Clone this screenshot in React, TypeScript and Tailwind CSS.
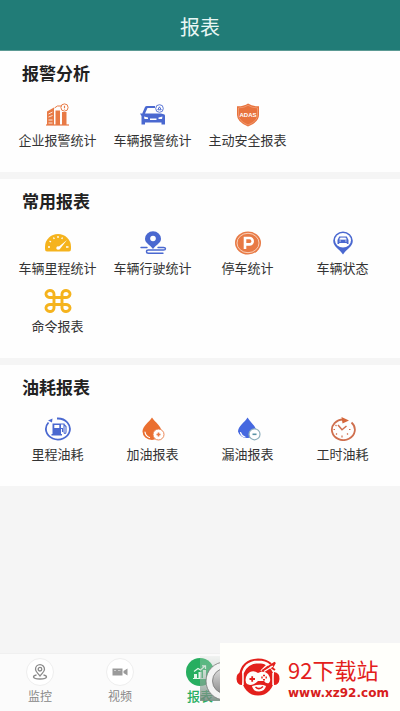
import type { ReactNode } from "react";

type Item = { label: string; icon: ReactNode };
type Section = { title: string; items: Item[] };

const ORANGE = "#e87a45";
const BLUE = "#4a68d0";
const YELLOW = "#f5b31d";

function Icon({ children }: { children: ReactNode }) {
  return (
    <svg viewBox="0 0 28 24" className="h-6 w-7" fill="none" aria-hidden="true">
      {children}
    </svg>
  );
}

const BuildingsIcon = (
  <Icon>
    <path d="M3 8.500 L10 4.500 V22 H3Z" fill={ORANGE} />
    <path d="M4.500 11 L8.500 9 M4.500 14 L8.500 12.500 M4.500 17 H8.500 M4.500 20 H8.500" stroke="#fff" strokeWidth="0.800" />
    <path d="M11.500 7.500 H16 V22 H11.500Z M18 9 H22.500 V22 H18Z" fill={ORANGE} />
    <path d="M2 22 H25" stroke={ORANGE} strokeWidth="1.200" />
    <path d="M10.500 5 Q13 2 17 3" stroke={ORANGE} strokeWidth="1" />
    <circle cx="20.500" cy="4.500" r="3.600" fill="#fff" stroke={ORANGE} strokeWidth="1" />
    <path d="M20.500 2.800 V5 M20.500 5.800 V6.500" stroke={ORANGE} strokeWidth="1.200" />
  </Icon>
);

const CarAlarmIcon = (
  <Icon>
    <path d="M3 11 L6 4 Q6.500 3 8 3 H16 V5 H8.500 L6 10.500 H22 L25.500 11.500 Q26 12 26 13 V21.500 H22.500 V19.500 H6 V21.500 H2.500 V13 L1 10.500 H3Z" fill={BLUE} />
    <path d="M5 13.500 L9 14.500 V16 H5.500Z M23.500 13.500 L19.500 14.500 V16 H23Z M11 15.500 H17.500 V17 H11Z" fill="#fff" />
    <circle cx="20.500" cy="5.500" r="3.800" fill="#fff" stroke={BLUE} strokeWidth="0.900" />
    <path d="M18.800 6.800 L20.500 3.800 L22.200 6.800Z" stroke={BLUE} strokeWidth="1" />
  </Icon>
);

const ShieldIcon = (
  <Icon>
    <path d="M14 .5 Q18 3.500 25 3.300 V12 Q25 19 14 23.500 Q3 19 3 12 V3.300 Q10 3.500 14 .5Z" fill="#e8733d" />
    <path d="M14 2.300 Q18 5 23.500 4.900 V12 Q23.500 18 14 22 Q4.500 18 4.500 12 V4.900 Q10 5 14 2.300Z" stroke="#f3a47e" strokeWidth="0.700" />
    <text x="14" y="13.500" textAnchor="middle" fill="#fff" fontSize="6" fontWeight="bold" fontFamily="Liberation Sans, sans-serif">ADAS</text>
  </Icon>
);

const GaugeIcon = (
  <Icon>
    <path d="M1 15.500 A13 12.500 0 0 1 27 15.500 V18 Q27 20.500 25 20.500 H3 Q1 20.500 1 18Z" fill={YELLOW} />
    <path d="M4 16 H6 M5.500 10 L7 11 M9.500 6.500 L10.300 8 M14 5 V7 M18.500 6.500 L17.700 8 M22 16 H24.500" stroke="#fff" strokeWidth="1.300" />
    <path d="M12.500 17.500 L23 9 L15.500 18.500Z" fill="#fff" />
    <circle cx="14" cy="17" r="1.700" fill="#fff" />
  </Icon>
);

const RouteIcon = (
  <Icon>
    <path d="M14 18 C10 13 6 12 6 7.800 A8 7.500 0 0 1 22 7.800 C22 12 18 13 14 18Z" fill={BLUE} />
    <circle cx="14" cy="7.500" r="2.800" fill="#fff" />
    <path d="M2 16.500 H8 M19 16.500 H24.500 Q26.500 16.500 26.500 17.800 Q26.500 19 24.500 19 H9.500 Q7.500 19 7.500 20.500 Q7.500 22.300 9.500 22.300 H24" stroke={BLUE} strokeWidth="1.400" strokeLinecap="round" />
  </Icon>
);

const ParkingIcon = (
  <Icon>
    <ellipse cx="14" cy="12" rx="13" ry="11.500" fill={ORANGE} />
    <ellipse cx="14" cy="12" rx="11" ry="9.700" stroke="#fbd9c6" strokeWidth="0.900" />
    <path d="M11 18 V7 H15.500 A3.200 3.200 0 0 1 15.500 13.400 H11" stroke="#fff" strokeWidth="2.600" />
  </Icon>
);

const CarPinIcon = (
  <Icon>
    <path d="M14 23.500 C11 18.500 4.200 16 4.200 9.800 A9.800 9.300 0 0 1 23.800 9.800 C23.800 16 17 18.500 14 23.500Z" fill={BLUE} />
    <ellipse cx="14" cy="9.300" rx="8" ry="7.300" fill="#fff" />
    <path d="M8.500 9 L10.200 5.500 H17.800 L19.500 9 V13 H17.800 V12 H10.200 V13 H8.500Z" fill={BLUE} />
    <path d="M10.700 8.300 L11.400 6.900 H16.600 L17.300 8.300Z M10.300 10 H12 M16 10 H17.700" fill="#fff" stroke="#fff" strokeWidth="0.700" />
  </Icon>
);

const CommandIcon = (
  <Icon>
    <path d="M10 8.500 H18 V15.500 H10Z M10 8.500 H6.500 A4 3.500 0 1 1 10 5Z M18 8.500 V5 A4 3.500 0 1 1 21.500 8.500Z M10 15.500 V19 A4 3.500 0 1 1 6.500 15.500Z M18 15.500 H21.500 A4 3.500 0 1 1 18 19Z" stroke={YELLOW} strokeWidth="2.900" />
  </Icon>
);

const FuelMileageIcon = (
  <Icon>
    <path d="M13 1.500 H14 A12 10.500 0 1 1 4.500 5.500" stroke={BLUE} strokeWidth="1.800" />
    <path d="M4 3.500 L8.500 1.500 L8 5.500Z" fill={BLUE} />
    <path d="M8.500 6.500 H17 V17 H18 V18.500 H7.500 V17 H8.500Z" fill={BLUE} />
    <path d="M10.300 8 H15.300 V11 H10.300Z" fill="#fff" />
    <path d="M17 7 H20 V15 Q20 16.500 21 16.500 Q22 16.500 22 15 V9.500 L20 7.500 M17 11.500 H18.500 V15" stroke={BLUE} strokeWidth="1.100" />
  </Icon>
);

const RefuelIcon = (
  <Icon>
    <path d="M13 .5 C16 5 22.500 9.500 22.500 14.500 A9.500 8.500 0 0 1 3.500 14.500 C3.500 9.500 10 5 13 .5Z" fill="#ea6f30" />
    <path d="M6 15 Q6.500 19 10.500 20.500" stroke="#fff" strokeWidth="1.200" strokeLinecap="round" />
    <circle cx="19.500" cy="17.500" r="5.500" fill="#fff" stroke={ORANGE} strokeWidth="0.900" />
    <path d="M19.500 15.500 V19.500 M17.500 17.500 H21.500" stroke={ORANGE} strokeWidth="1.600" />
  </Icon>
);

const LeakIcon = (
  <Icon>
    <path d="M13.500 .5 C16 5 22.500 9.500 22.500 14.500 A9.500 8.500 0 0 1 4 14.500 C4 9.500 11 5 13.500 .5Z" fill="#4668e0" />
    <path d="M6.500 15.500 Q7.500 19 11 20" stroke="#fff" strokeWidth="1.200" strokeLinecap="round" />
    <circle cx="20.500" cy="17.300" r="5.500" fill="#fff" stroke="#8fb0bd" strokeWidth="1.200" />
    <path d="M18.500 17.300 H22.500" stroke="#5a93a5" strokeWidth="1.600" />
  </Icon>
);

const ClockIcon = (
  <Icon>
    <path d="M22.500 5.500 A11.500 10.300 0 1 1 15 2.500" stroke="#cf6f4e" strokeWidth="1.800" />
    <path d="M12.500 0 L20 3.500 L13.500 6.500Z" fill="#d5673a" />
    <path d="M9 8 L13 12.800 L17.500 9" stroke="#cf6f4e" strokeWidth="1.500" />
    <path d="M4.500 12.500 H6 M20 12.500 H21.500 M13 18.500 V20.500 M7 17.500 L8 16.500 M18 16.500 L19 17.500 M6.500 8 L7.500 9" stroke="#cf6f4e" strokeWidth="1.200" />
  </Icon>
);

const sections: Section[] = [
  {
    title: "报警分析",
    items: [
      { label: "企业报警统计", icon: BuildingsIcon },
      { label: "车辆报警统计", icon: CarAlarmIcon },
      { label: "主动安全报表", icon: ShieldIcon },
    ],
  },
  {
    title: "常用报表",
    items: [
      { label: "车辆里程统计", icon: GaugeIcon },
      { label: "车辆行驶统计", icon: RouteIcon },
      { label: "停车统计", icon: ParkingIcon },
      { label: "车辆状态", icon: CarPinIcon },
      { label: "命令报表", icon: CommandIcon },
    ],
  },
  {
    title: "油耗报表",
    items: [
      { label: "里程油耗", icon: FuelMileageIcon },
      { label: "加油报表", icon: RefuelIcon },
      { label: "漏油报表", icon: LeakIcon },
      { label: "工时油耗", icon: ClockIcon },
    ],
  },
];

function ReportSection({ title, items }: Section) {
  return (
    <section className="bg-[#fefefe] px-2.5 pt-2.5 pb-[23px]">
      <h2 className="pl-3 text-[17px] leading-6 font-bold text-[#222]">{title}</h2>
      <div className="mt-[18px] grid grid-cols-4 gap-y-3">
        {items.map((item) => (
          <button key={item.label} type="button" className="flex flex-col items-center gap-1">
            {item.icon}
            <span className="text-[13px] leading-[18px] whitespace-nowrap text-[#333]">{item.label}</span>
          </button>
        ))}
      </div>
    </section>
  );
}

function TabBar() {
  return (
    <nav className="grid h-[58px] grid-cols-5 border-t border-[#f0f0f0] bg-[#fbfbfb] pt-1">
      <button type="button" className="flex flex-col items-center gap-px text-[#888]">
        <span className="flex size-7 items-center justify-center rounded-full border border-[#eee] bg-white">
          <svg viewBox="0 0 16 16" className="size-4" fill="none" stroke="#8a8a8a" strokeWidth="1.300" aria-hidden="true">
            <path d="M8 12 C6 9 3.500 8 3.500 5.200 A4.500 4.500 0 0 1 12.500 5.200 C12.500 8 10 9 8 12Z" />
            <circle cx="8" cy="5.200" r="1.800" />
            <path d="M4.500 11 Q1.500 11.500 1.500 13 Q2 15 8 15 Q14 15 14.500 13 Q14.500 11.500 11.500 11" />
          </svg>
        </span>
        <span className="text-xs leading-[18px]">监控</span>
      </button>
      <button type="button" className="flex flex-col items-center gap-px text-[#888]">
        <span className="flex size-7 items-center justify-center rounded-full border border-[#eee] bg-white">
          <svg viewBox="0 0 16 16" className="size-4" fill="#9a9a9a" aria-hidden="true">
            <path d="M0.500 4.500 H10.500 V11.500 H0.500Z M11.500 7 L15.500 4.500 V11.500 L11.500 9Z" />
            <path d="M2 6.500 H4 M6 6.500 H8.500" stroke="#ccc" />
          </svg>
        </span>
        <span className="text-xs leading-[18px]">视频</span>
      </button>
      <button type="button" aria-current="page" className="flex flex-col items-center gap-px text-[#27ae60]">
        <span className="flex size-7 items-center justify-center rounded-full bg-[#27ae60]">
          <svg viewBox="0 0 16 16" className="size-4" fill="#e4f6ea" aria-hidden="true">
            <path d="M2 10 H5 V14 H2Z M6.500 8 H9.500 V14 H6.500Z M11 6 H14 V14 H11Z M1 14 H15 V15 H1Z" />
            <path d="M2 7.500 L6 4.500 L8.500 6 L13 2 M10 1.800 H13.500 V5" fill="none" stroke="#e4f6ea" strokeWidth="1.200" />
          </svg>
        </span>
        <span className="text-[13px] leading-[18px] font-medium">报表</span>
      </button>
    </nav>
  );
}

function SiteBadge() {
  return (
    <aside className="fixed right-0 bottom-0 flex items-end">
      <svg viewBox="0 0 20 45" className="mb-2.5 h-[45px] w-5" aria-hidden="true">
        <defs>
          <linearGradient id="disc" x1="0" y1="0" x2="0" y2="1">
            <stop offset="0" stopColor="#dedede" />
            <stop offset="1" stopColor="#8c8c8c" />
          </linearGradient>
          <linearGradient id="veil" x1="0" y1="0" x2="0" y2="1">
            <stop offset="0" stopColor="#cfd8d2" stopOpacity="0.250" />
            <stop offset="1" stopColor="#6d8579" stopOpacity="0.850" />
          </linearGradient>
        </defs>
        <path d="M0 0 H20 V45 H0Z" fill="url(#veil)" />
        <circle cx="25" cy="25" r="19" fill="#f3f3f3" stroke="#777" strokeWidth="0.800" />
        <circle cx="25" cy="25" r="12.500" fill="url(#disc)" stroke="#777" strokeWidth="0.800" />
      </svg>
      <div className="flex h-[68px] w-[180px] items-center bg-[#fffffb] pl-4">
        <svg viewBox="0 0 44 38" className="h-[38px] w-11 shrink-0" fill="none" aria-hidden="true">
          <ellipse cx="22" cy="21" rx="16" ry="16.500" fill="#e3201b" />
          <path d="M4 18 Q6 2 22 1.500 Q30 1.500 35 6" stroke="#e3201b" strokeWidth="2.200" />
          <path d="M7 15 Q11 5 22 4.500 Q28 4.500 31 7 L25 13" stroke="#fffffb" strokeWidth="1.600" />
          <path d="M26 13 L39 4.500 L36 10 L39 12" stroke="#e3201b" strokeWidth="2" />
          <path d="M28 13.500 L37 8" stroke="#fffffb" strokeWidth="1.300" />
          <path d="M6 14 Q0 15 0.500 21 Q1 27 6 27Z M38 14 Q44 15 43.500 21 Q43 27 38 27Z" fill="#e3201b" />
          <path d="M7 15 V27 M37 15 V27" stroke="#fffffb" strokeWidth="1.500" />
          <path d="M14 14 Q18 12 22 15 Q28 12 32 16 Q36 22 33 25 Q30 26 28 23 H22 Q18 27 14 27 Q8 26 10 19 Q11 15.500 14 14Z" fill="#fffffb" />
          <path d="M13.500 21 H19 M16.200 18.200 V23.800" stroke="#e3201b" strokeWidth="1.800" />
          <path d="M28 16.800 V18.200 M28 21 V22.400 M25.300 19.600 H26.700 M29.500 19.600 H30.900" stroke="#e3201b" strokeWidth="2" />
          <path d="M16 28 Q17 33.500 23 33.500 Q29 33 30 28 Q25 25.500 16 28Z" fill="#fffffb" />
          <path d="M19.500 29 Q23 32.500 27 28.500" stroke="#e3201b" strokeWidth="1.500" />
        </svg>
        <div className="pl-2 whitespace-nowrap">
          <p className="text-[22px] leading-8 text-[#e3201b]">92下载站</p>
          <p className="font-['DejaVu_Sans',sans-serif] text-xs leading-4 font-bold text-[#d8201c]">www.xz92.com</p>
        </div>
      </div>
    </aside>
  );
}

export default function App() {
  return (
    <div className="flex min-h-screen flex-col bg-[#f5f5f5] font-['Noto_Sans_CJK_SC',sans-serif]">
      <header className="flex h-[51px] items-center justify-center border-b border-[#5b9a94] bg-[#217c77] pt-1">
        <h1 className="text-xl leading-7 text-[#e8f6f4]">报表</h1>
      </header>
      <main className="flex flex-1 flex-col gap-[7px]">
        {sections.map((section) => (
          <ReportSection key={section.title} {...section} />
        ))}
      </main>
      <TabBar />
      <SiteBadge />
    </div>
  );
}
